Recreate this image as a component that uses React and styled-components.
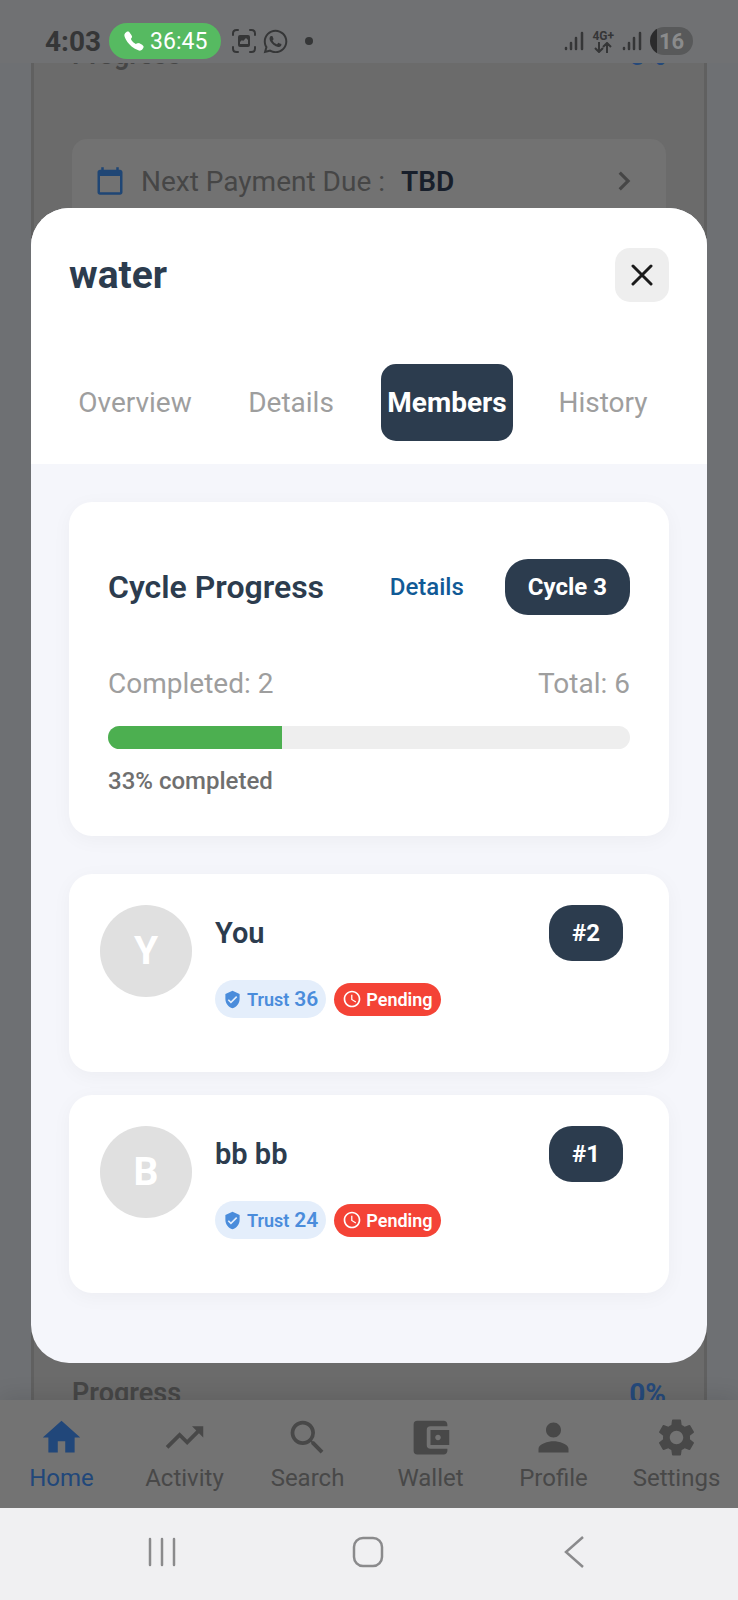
import { useState } from "react";
import styled, { createGlobalStyle } from "styled-components";
import {
    MdAccessTime,
    MdAccountBalanceWallet,
    MdCalendarToday,
    MdChevronRight,
    MdHome,
    MdPerson,
    MdSearch,
    MdSettings,
    MdTrendingUp,
    MdVerifiedUser,
} from "react-icons/md";
import { FaWhatsapp } from "react-icons/fa";
import { IoCall } from "react-icons/io5";

const tabs = ["Overview", "Details", "Members", "History"];

const members = [
    { id: 1, name: "You", trust: 36, status: "Pending", position: 2 },
    { id: 2, name: "bb bb", trust: 24, status: "Pending", position: 1 },
];

const navItems = [
    { label: "Home", Icon: MdHome },
    { label: "Activity", Icon: MdTrendingUp },
    { label: "Search", Icon: MdSearch },
    { label: "Wallet", Icon: MdAccountBalanceWallet },
    { label: "Profile", Icon: MdPerson },
    { label: "Settings", Icon: MdSettings },
];

export default function App() {
    return (
        <Screen>
            <GlobalStyle />
            <StatusBar />
            <AppFrame>
                <HomePage />
                <BottomNav />
                <Overlay>
                    <GroupDialog title="water" completed={2} total={6} cycle={3} />
                </Overlay>
            </AppFrame>
            <SystemNav />
        </Screen>
    );
}

function StatusBar() {
    return (
        <StatusContainer>
            <StatusSide>
                <Clock>4:03</Clock>
                <CallPill>
                    <IoCall size={22} />
                    36:45
                </CallPill>
                <StatusIcons>
                    <svg width="24" height="24" viewBox="0 0 24 24" fill="none" stroke="currentColor" strokeWidth="2" strokeLinecap="round">
                        <path d="M1 6V4.500Q1 1 4.500 1H6M18 1h1.500Q23 1 23 4.500V6M23 18v1.500Q23 23 19.500 23H18M6 23H4.500Q1 23 1 19.500V18" />
                        <path fill="currentColor" stroke="none" fillRule="evenodd" d="M8 6h8a2 2 0 0 1 2 2v8a2 2 0 0 1-2 2H8a2 2 0 0 1-2-2V8a2 2 0 0 1 2-2zm0 9h8v-4l-2-2-3 3-1-1-2 2z" />
                    </svg>
                    <FaWhatsapp size={27} />
                </StatusIcons>
                <Dot />
            </StatusSide>
            <StatusSide>
                <SignalIcon />
                <NetworkType>
                    4G+
                    <svg width="18" height="11" viewBox="0 0 18 11" fill="none" stroke="currentColor" strokeWidth="2">
                        <path d="M5 0v9M1 6l4 4 4-4M13 11V2M9 5l4-4 4 4" />
                    </svg>
                </NetworkType>
                <SignalIcon />
                <Battery>16</Battery>
            </StatusSide>
        </StatusContainer>
    );
}

function SignalIcon() {
    return (
        <svg width="20" height="20" viewBox="0 0 20 20" fill="none" stroke="currentColor" strokeWidth="2.500" strokeLinecap="round">
            <path d="M2 17v1M7 12v6M12 7v11M18 2v16" />
        </svg>
    );
}

function HomePage() {
    return (
        <PageArea>
            <PageCard>
                <ProgressRow>
                    <span>Progress</span>
                    <b>0%</b>
                </ProgressRow>
                <PaymentCard>
                    <MdCalendarToday size={30} color="#1f4675" />
                    <p>Next Payment Due :</p>
                    <strong>TBD</strong>
                    <MdChevronRight size={38} />
                </PaymentCard>
                <ProgressRow $last>
                    <span>Progress</span>
                    <b>0%</b>
                </ProgressRow>
            </PageCard>
        </PageArea>
    );
}

function BottomNav() {
    return (
        <NavContainer>
            {navItems.map(({ label, Icon }) => (
                <NavLink key={label} href={"#" + label.toLowerCase()} $active={label === "Home"}>
                    <Icon size={45} />
                    {label}
                </NavLink>
            ))}
        </NavContainer>
    );
}

function GroupDialog({ title, completed, total, cycle }) {
    const [activeTab, setActiveTab] = useState("Members");
    const percent = (completed / total) * 100;

    return (
        <Dialog role="dialog" aria-label={title}>
            <DialogHeader>
                <TitleRow>
                    <h1>{title}</h1>
                    <CloseButton aria-label="Close">
                        <svg width="22" height="22" viewBox="0 0 22 22" fill="none" stroke="currentColor" strokeWidth="3" strokeLinecap="round">
                            <path d="M2 2l18 18M20 2L2 20" />
                        </svg>
                    </CloseButton>
                </TitleRow>
                <TabList role="tablist">
                    {tabs.map((tab) => (
                        <Tab
                            key={tab}
                            role="tab"
                            aria-selected={tab === activeTab}
                            $active={tab === activeTab}
                            onClick={() => setActiveTab(tab)}
                        >
                            {tab}
                        </Tab>
                    ))}
                </TabList>
            </DialogHeader>
            <DialogBody>
                <CycleCard>
                    <CycleHeading>
                        <h2>Cycle Progress</h2>
                        <DetailsButton>Details</DetailsButton>
                        <DarkPill>Cycle {cycle}</DarkPill>
                    </CycleHeading>
                    <CycleTotals>
                        <span>Completed: {completed}</span>
                        <span>Total: {total}</span>
                    </CycleTotals>
                    <Track>
                        <Fill style={{ width: `${percent}%` }} />
                    </Track>
                    <PercentText>{Math.round(percent)}% completed</PercentText>
                </CycleCard>
                <MemberList>
                    {members.map((member) => (
                        <MemberItem key={member.id} member={member} />
                    ))}
                </MemberList>
            </DialogBody>
        </Dialog>
    );
}

function MemberItem({ member }) {
    const { name, trust, status, position } = member;

    return (
        <MemberCard>
            <Avatar>{name[0].toUpperCase()}</Avatar>
            <MemberInfo>
                <MemberTop>
                    <h3>{name}</h3>
                    <DarkPill>#{position}</DarkPill>
                </MemberTop>
                <Badges>
                    <TrustBadge>
                        <MdVerifiedUser size={19} />
                        <span>Trust</span>
                        <b>{trust}</b>
                    </TrustBadge>
                    <StatusBadge>
                        <MdAccessTime size={20} />
                        {status}
                    </StatusBadge>
                </Badges>
            </MemberInfo>
        </MemberCard>
    );
}

function SystemNav() {
    return (
        <SystemContainer>
            <SystemButton aria-label="Recent apps">
                <svg width="30" height="32" viewBox="0 0 30 32" fill="none" stroke="currentColor" strokeWidth="2.500" strokeLinecap="round">
                    <path d="M3 3v26M15 3v26M27 3v26" />
                </svg>
            </SystemButton>
            <SystemButton aria-label="Home screen">
                <svg width="32" height="32" viewBox="0 0 32 32" fill="none" stroke="currentColor" strokeWidth="2.500">
                    <rect x="2" y="2" width="28" height="28" rx="9" />
                </svg>
            </SystemButton>
            <SystemButton aria-label="Back">
                <svg width="20" height="32" viewBox="0 0 20 32" fill="none" stroke="currentColor" strokeWidth="2.500">
                    <path d="M19 1L2 16l17 15" />
                </svg>
            </SystemButton>
        </SystemContainer>
    );
}

const GlobalStyle = createGlobalStyle`
    * {
        box-sizing: border-box;
    }
    body {
        margin: 0;
        font-family: Roboto, "Liberation Sans", sans-serif;
    }
    h1, h2, h3, p {
        margin: 0;
    }
    button {
        border: none;
        padding: 0;
        background: none;
        font-family: inherit;
        cursor: pointer;
    }
    svg {
        display: block;
        flex-shrink: 0;
    }
`;

const Screen = styled.div`
    min-height: 100vh;
    display: flex;
    flex-direction: column;
    background: #6e7073;
`;

const StatusContainer = styled.header`
    height: 63px;
    padding: 19px 45px 0;
    display: flex;
    justify-content: space-between;
    background: #707173;
    color: #353637;
`;

const StatusSide = styled.div`
    height: 44px;
    display: flex;
    align-items: center;
    gap: 8px;
`;

const Clock = styled.span`
    font-size: 28px;
    font-weight: 700;
`;

const CallPill = styled.span`
    height: 36px;
    padding: 0 14px;
    border-radius: 18px;
    display: flex;
    align-items: center;
    gap: 5px;
    background: #56ba61;
    color: #fff;
    font-size: 23px;
`;

const StatusIcons = styled.div`
    display: flex;
    align-items: center;
    gap: 6px;
    margin-left: 3px;
`;

const Dot = styled.i`
    width: 8px;
    height: 8px;
    margin-left: 8px;
    border-radius: 4px;
    background: #353637;
`;

const NetworkType = styled.span`
    display: flex;
    flex-direction: column;
    align-items: center;
    font-size: 12px;
    font-weight: 700;
    line-height: 12px;
`;

const Battery = styled.span`
    width: 43px;
    height: 28px;
    border-radius: 14px;
    display: flex;
    align-items: center;
    justify-content: center;
    background: linear-gradient(90deg, #2b2b2c 16%, #58595a 16%);
    color: #8a8b8c;
    font-size: 22px;
    font-weight: 700;
`;

const AppFrame = styled.div`
    flex: 1;
    position: relative;
    display: flex;
    flex-direction: column;
`;

const PageArea = styled.main`
    flex: 1;
    padding: 0 31px;
    display: flex;
    overflow: hidden;
`;

const PageCard = styled.section`
    flex: 1;
    padding: 0 38px;
    border: solid #606060;
    border-width: 0 3px;
    display: flex;
    flex-direction: column;
    background: #6b6b6b;
`;

const ProgressRow = styled.div`
    height: 32px;
    margin-top: ${(props) => (props.$last ? "auto" : "-24px")};
    margin-bottom: ${(props) => (props.$last ? "-9px" : "0")};
    display: flex;
    align-items: center;
    justify-content: space-between;
    color: #464646;
    font-size: 27px;
    font-weight: 600;
    b {
        color: #25497a;
        font-size: 28px;
        font-weight: 700;
    }
`;

const PaymentCard = styled.div`
    height: 84px;
    margin-top: 68px;
    padding: 0 23px;
    border-radius: 15px;
    display: flex;
    align-items: center;
    background: #727272;
    color: #464646;
    font-size: 28px;
    p {
        margin-left: 16px;
    }
    strong {
        margin-left: 16px;
        color: #181f2b;
        font-weight: 600;
    }
    svg:last-child {
        margin-left: auto;
    }
`;

const NavContainer = styled.nav`
    height: 108px;
    padding-top: 15px;
    display: grid;
    grid-template-columns: repeat(6, 1fr);
    background: #737373;
    box-shadow: 0 -4px 20px #0000001A;
    position: relative;
`;

const NavLink = styled.a`
    display: flex;
    flex-direction: column;
    align-items: center;
    gap: 4px;
    color: ${(props) => (props.$active ? "#21477a" : "#484848")};
    font-size: 24px;
    line-height: 28px;
    text-decoration: none;
`;

const Overlay = styled.div`
    position: absolute;
    inset: 0;
    padding: 0 31px;
    display: flex;
    align-items: center;
`;

const Dialog = styled.section`
    flex: 1;
    border-radius: 38px;
    overflow: hidden;
    background: #f5f6fb;
    color: #2c3c4e;
`;

const DialogHeader = styled.div`
    padding: 40px 26px 23px;
    background: #fff;
`;

const TitleRow = styled.div`
    margin-bottom: 62px;
    padding: 0 12px;
    display: flex;
    align-items: center;
    justify-content: space-between;
    h1 {
        font-size: 39px;
        font-weight: 700;
        line-height: 50px;
    }
`;

const CloseButton = styled.button`
    width: 54px;
    height: 54px;
    border-radius: 15px;
    display: flex;
    align-items: center;
    justify-content: center;
    background: #eee;
    color: #1a1a1a;
`;

const TabList = styled.div`
    display: grid;
    grid-template-columns: repeat(4, 1fr);
`;

const Tab = styled.button`
    height: 77px;
    margin: 0 12px;
    border-radius: 15px;
    background: ${(props) => (props.$active ? "#2c3c4e" : "none")};
    color: ${(props) => (props.$active ? "#fff" : "#9e9e9e")};
    font-size: 28px;
    font-weight: ${(props) => (props.$active ? 700 : 400)};
`;

const DialogBody = styled.div`
    padding: 38px 38px 70px;
`;

const Card = styled.div`
    border-radius: 23px;
    background: #fff;
    box-shadow: 0 4px 20px #0000000A;
`;

const CycleCard = styled(Card)`
    padding: 57px 39px 39px;
`;

const CycleHeading = styled.div`
    display: flex;
    align-items: center;
    h2 {
        margin-right: auto;
        font-size: 32px;
        font-weight: 600;
    }
`;

const DetailsButton = styled.button`
    margin-right: 41px;
    color: #115a96;
    font-size: 24px;
    font-weight: 500;
`;

const DarkPill = styled.span`
    height: 56px;
    padding: 0 23px;
    border-radius: 23px;
    display: flex;
    align-items: center;
    background: #2c3c4e;
    color: #fff;
    font-size: 24px;
    font-weight: 700;
`;

const CycleTotals = styled.div`
    margin: 50px 0 23px;
    display: flex;
    justify-content: space-between;
    color: #9e9e9e;
    font-size: 28px;
    line-height: 38px;
`;

const Track = styled.div`
    height: 23px;
    border-radius: 12px;
    overflow: hidden;
    background: #eee;
`;

const Fill = styled.div`
    height: 100%;
    background: #4caf50;
`;

const PercentText = styled.p`
    margin-top: 16px;
    color: #6f6f6f;
    font-size: 24px;
    font-weight: 500;
    line-height: 32px;
`;

const MemberList = styled.div`
    margin-top: 38px;
    display: flex;
    flex-direction: column;
    gap: 23px;
`;

const MemberCard = styled(Card)`
    padding: 31px 46px 54px 31px;
    display: flex;
    gap: 23px;
`;

const Avatar = styled.div`
    width: 92px;
    height: 92px;
    border-radius: 46px;
    display: flex;
    align-items: center;
    justify-content: center;
    background: #e0e0e0;
    color: #fff;
    font-size: 39px;
    font-weight: 700;
`;

const MemberInfo = styled.div`
    flex: 1;
`;

const MemberTop = styled.div`
    display: flex;
    align-items: center;
    justify-content: space-between;
    h3 {
        font-size: 29px;
        font-weight: 600;
    }
`;

const Badges = styled.div`
    margin-top: 19px;
    display: flex;
    align-items: center;
    gap: 8px;
`;

const TrustBadge = styled.span`
    height: 38px;
    padding: 0 8px;
    border-radius: 19px;
    display: flex;
    align-items: center;
    gap: 5px;
    background: #e4eefb;
    color: #4a8cdb;
    font-size: 18px;
    font-weight: 600;
    b {
        font-size: 21px;
        font-weight: 600;
    }
`;

const StatusBadge = styled.span`
    height: 33px;
    padding: 0 8px;
    border-radius: 17px;
    display: flex;
    align-items: center;
    gap: 4px;
    background: #f44336;
    color: #fff;
    font-size: 18px;
    font-weight: 600;
`;

const SystemContainer = styled.footer`
    height: 92px;
    padding: 0 61px 4px 59px;
    position: relative;
    display: grid;
    grid-template-columns: repeat(3, 1fr);
    align-items: center;
    background: #f0f0f2;
`;

const SystemButton = styled.button`
    display: flex;
    justify-content: center;
    color: #8a8a8c;
`;
